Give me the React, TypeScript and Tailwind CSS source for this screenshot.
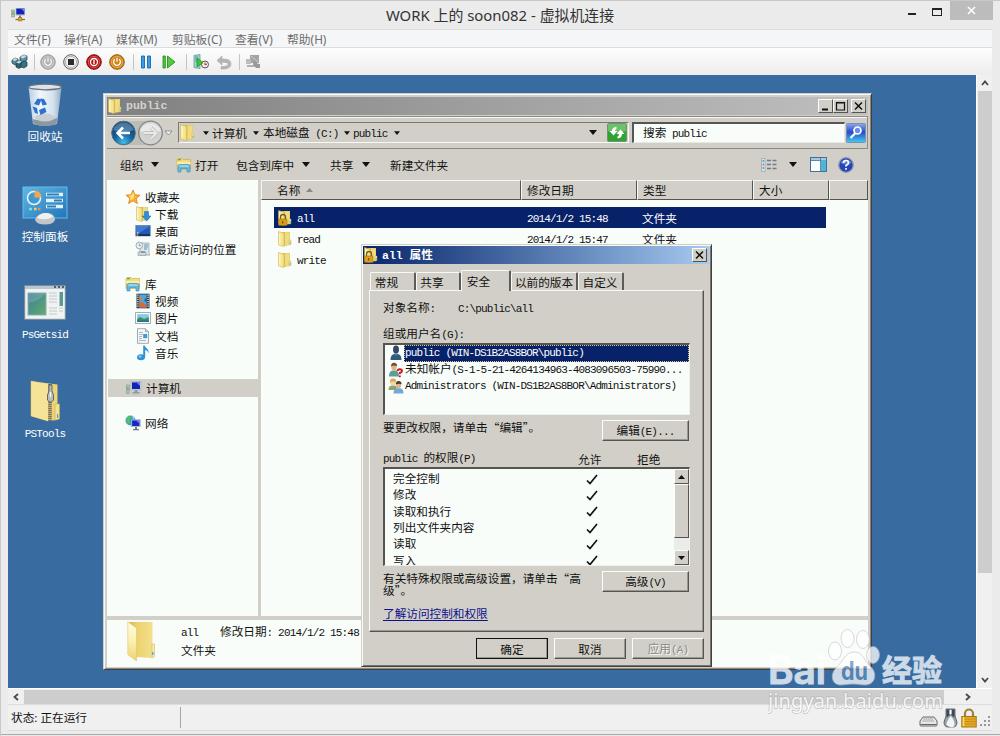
import React from "react";

type Kids = { children?: React.ReactNode };

const RAISED =
  "border border-t-[#fbfdfb] border-l-[#fbfdfb] border-r-[#555550] border-b-[#555550]";

/* Bitmap-like system text: full-width glyphs with half-width Latin between them. */
function T({ s, className = "" }: { s: string; className?: string }) {
  const parts = s.match(/[\x20-\x7e]+|[^\x20-\x7e]+/g) || [];
  return (
    <span className={"whitespace-pre " + className}>
      {parts.map((p, i) =>
        /[\x20-\x7e]/.test(p[0]) ? (
          <span key={i} className="font-['Liberation_Mono',monospace] text-[11px] tracking-[-0.83px]">
            {p}
          </span>
        ) : (
          <span key={i}>{p}</span>
        )
      )}
    </span>
  );
}

function Down({ small = false }: { small?: boolean }) {
  return (
    <svg width={small ? 6 : 8} height={small ? 4 : 5} viewBox="0 0 8 5" className="shrink-0">
      <path d="M0 0h8L4 5z" fill="#111" />
    </svg>
  );
}

function Folder({ size = 16, lock = false, arrow = false }: { size?: number; lock?: boolean; arrow?: boolean }) {
  return (
    <svg width={size} height={size} viewBox="0 0 16 16" className="shrink-0">
      <path d="M5 1h8v13l-6 1z" fill="#dcbf55" />
      <path d="M8 1.300h4.700v12.500L8 14.600z" fill="#f0db82" />
      <path d="M1.500 .6 7 2.200V15.600L1.500 14z" fill="#f6e48f" stroke="#cfae45" strokeWidth=".5" />
      <path d="M2.800 2.200v11.200" stroke="#fdf8cf" strokeWidth="1.200" />
      <path d="M12 9h2v4.500l-2 .5z" fill="#f5e69b" stroke="#c8ab4a" strokeWidth=".4" />
      <path d="M12.600 11h1.200v1.800h-1.200z" fill="#58b9d6" />
      {lock && (
        <g>
          <path d="M3.500 9V7a2.500 2.500 0 0 1 5 0v2" fill="none" stroke="#77611f" strokeWidth="1.300" />
          <rect x="1.500" y="9" width="8.500" height="6.500" rx=".6" fill="#d99e1c" stroke="#8e6510" strokeWidth=".5" />
          <path d="M5.200 11h1v2.500h-1z" fill="#5d420a" />
        </g>
      )}
      {arrow && <path d="M9.500 5.500h4V10H16l-4.500 5L7 10h2.500z" fill="#2b8fdc" stroke="#1768ac" strokeWidth=".5" />}
    </svg>
  );
}

function BigFolder() {
  return (
    <svg width="28" height="41" viewBox="0 0 28 41" className="shrink-0">
      <defs>
        <linearGradient id="bf" x1="0" x2="1"><stop offset="0" stopColor="#d8b949" /><stop offset=".35" stopColor="#ecd26e" /><stop offset="1" stopColor="#f3df8c" /></linearGradient>
        <linearGradient id="bl" x1="0" y1="0" x2="0" y2="1"><stop offset="0" stopColor="#fffce6" /><stop offset=".5" stopColor="#fbf0b0" /><stop offset="1" stopColor="#ecd36f" /></linearGradient>
      </defs>
      <path d="M2 1h23.500v36L9 36z" fill="url(#bf)" />
      <path d="M.8.8 9.500 7v33L.8 33.500z" fill="url(#bl)" stroke="#dfc669" strokeWidth=".6" />
      <path d="M25 23h2.500v12.500L25 37z" fill="#f8ecae" stroke="#d5b856" strokeWidth=".6" />
      <path d="M25 31h1.500v3H25z" fill="#57a9e2" />
    </svg>
  );
}

function Library() {
  return (
    <svg width="16" height="16" viewBox="0 0 16 16" className="shrink-0">
      <path d="M1 2.500 2 1.500h4l1 1h7.500v10H1z" fill="#f3dc7c" stroke="#c9a640" strokeWidth=".6" />
      <path d="M2 2h3v1.300H2z" fill="#57b847" />
      <path d="M1 5h13.500v2H1z" fill="#faedab" />
      <path d="M2 15V9.500Q2 7.500 4 7.500h8q2 0 2 2V15h-3v-3.500H5V15z" fill="#63b9e6" stroke="#3487bb" strokeWidth=".6" />
      <path d="M3 9.500Q3 8.500 4 8.500h8q1 0 1 1z" fill="#c3e8f8" />
    </svg>
  );
}

function Computer({ size = 16 }: { size?: number }) {
  return (
    <svg width={size} height={size} viewBox="0 0 16 16" className="shrink-0">
      <rect x=".6" y="5" width="2.600" height="8.500" fill="#b9bfc2" stroke="#7b8589" strokeWidth=".5" />
      <rect x="1.300" y="7" width="1.200" height="3.500" fill="#4fbf48" />
      <rect x="5" y="1.500" width="10" height="8.500" fill="#c9d2dc" stroke="#9aa4b2" strokeWidth=".5" />
      <rect x="6" y="2.400" width="8" height="6.600" fill="#1421b8" />
      <path d="M10.500 2.400H14V6z" fill="#6c87f0" />
      <path d="M8.500 10h3v2h2v1.500h-7V12h2z" fill="#8f999f" />
      <path d="M6 14h7.500" stroke="#b4bbc0" />
    </svg>
  );
}

function HostIcon() {
  return (
    <svg width="15" height="15" viewBox="0 0 15 15" className="shrink-0">
      <rect x=".6" y="3" width="3" height="7" fill="#b9c6b9" stroke="#7b8589" strokeWidth=".5" />
      <rect x="1.300" y="4.500" width="1.400" height="3.500" fill="#4fbf48" />
      <rect x="4.500" y="1" width="9.500" height="7.500" fill="#b3bfd0" />
      <rect x="5.300" y="1.600" width="8" height="5.800" fill="#1421b8" />
      <path d="M10 1.600h3.300V5z" fill="#6c87f0" />
      <path d="M9 8.500v3" stroke="#5f676c" strokeWidth="1.600" />
      <path d="M4.500 12.500h9.500" stroke="#8a6a1d" strokeWidth="1.200" />
      <rect x="7.300" y="10.700" width="3.600" height="3.300" fill="#e2a423" stroke="#8a6a1d" strokeWidth=".5" />
    </svg>
  );
}

function Star() {
  return (
    <svg width="16" height="16" viewBox="0 0 16 16" className="shrink-0">
      <path d="M8 1l2 4.800 5 .4-3.800 3.300 1.200 5L8 11.800l-4.400 2.700 1.200-5L1 6.200l5-.4z" fill="#fbb034" stroke="#dd7d17" strokeWidth=".8" />
      <path d="M8 3l1.300 3.500L8 10 5 11l.8-2.500-2-1.700 2.700-.3z" fill="#fde382" />
    </svg>
  );
}

function DesktopIcon() {
  return (
    <svg width="16" height="16" viewBox="0 0 16 16" className="shrink-0">
      <rect x=".8" y="2.500" width="14.400" height="10.500" fill="#2658b5" stroke="#55779f" strokeWidth=".6" />
      <path d="M1.200 3h13.600L6 9 1.200 11z" fill="#437bd2" />
      <rect x="1" y="11" width="14" height="2" fill="#18335f" />
      <rect x="2" y="9" width="1.500" height="1.500" fill="#7fe3d3" />
      <circle cx="2.400" cy="12" r=".9" fill="#f18d37" />
    </svg>
  );
}

function Recent() {
  return (
    <svg width="16" height="16" viewBox="0 0 16 16" className="shrink-0">
      <path d="M6 2h8v11l1 1H5V7z" fill="#e3e8ea" stroke="#8b989d" strokeWidth=".7" />
      <path d="M9 4h4M9 6h4M9 8h3" stroke="#5b93b9" />
      <circle cx="4.300" cy="4.500" r="3.300" fill="#eef2f4" stroke="#94a1a8" strokeWidth=".9" />
      <path d="M4.300 2.700v2h1.700" stroke="#637179" fill="none" strokeWidth=".7" />
      <path d="M3 11h8v3.500H3z" fill="#cfd6d9" stroke="#8b989d" strokeWidth=".6" />
      <path d="M6 10h4v2H6z" fill="#7f9dab" />
    </svg>
  );
}

function Video() {
  return (
    <svg width="16" height="16" viewBox="0 0 16 16" className="shrink-0">
      <rect x="1.500" y=".7" width="13" height="14.600" fill="#303a40" />
      <rect x="4.300" y="1.500" width="7.400" height="13" fill="#4ba7e0" />
      <path d="M4.300 3 8 6.500 4.300 8.500z" fill="#e27843" />
      <path d="M11.700 3.500 9 7.500l2.700 2z" fill="#2764a8" />
      <path d="M4.300 10 8 9l3.700 4v1.500H4.300z" fill="#d9683c" />
      <path d="M2.900 1.500v13M13.100 1.500v13" stroke="#e6eef0" strokeWidth="1.300" strokeDasharray="1.200 1" />
    </svg>
  );
}

function Picture() {
  return (
    <svg width="16" height="16" viewBox="0 0 16 16" className="shrink-0">
      <rect x=".6" y="2.600" width="14.800" height="11" fill="#fafcfc" stroke="#8d9aa3" strokeWidth=".8" />
      <rect x="2.200" y="4.200" width="11.600" height="7.800" fill="#86c8e8" />
      <path d="M2.200 9 5 7l4 2 4.800-2v5H2.200z" fill="#3d8f62" />
      <path d="M2.200 10.500h11.600V12H2.200z" fill="#2a6c8d" />
    </svg>
  );
}

function Doc() {
  return (
    <svg width="16" height="16" viewBox="0 0 16 16" className="shrink-0">
      <path d="M2.500.7h8l3 3v11.600h-11z" fill="#f5f8fa" stroke="#8a959c" strokeWidth=".8" />
      <path d="M10.500.7v3h3" fill="#cfd8dd" stroke="#8a959c" strokeWidth=".7" />
      <path d="M4 4.500h4M4 6.500h4M4 8.500h3M4 10.500h3M4 12.500h7" stroke="#99a7b3" strokeWidth=".8" />
      <rect x="8.200" y="6" width="4" height="4.200" fill="#3f9bca" />
    </svg>
  );
}

function Music() {
  return (
    <svg width="16" height="16" viewBox="0 0 16 16" className="shrink-0">
      <ellipse cx="6" cy="12.300" rx="4" ry="3" fill="#2c93d7" />
      <path d="M8.200 12V.5h1.500c.5 2.800 4.900 3.300 3.900 8-.5-2.200-1.700-2.900-3.400-3.400V12z" fill="#2c93d7" />
      <ellipse cx="5" cy="11.500" rx="1.600" ry=".9" fill="#8fd0f3" />
    </svg>
  );
}

function Network() {
  return (
    <svg width="16" height="16" viewBox="0 0 16 16" className="shrink-0">
      <circle cx="5.500" cy="5.500" r="5" fill="#3a9bdb" />
      <path d="M1 4 4 .8 6.500 2 4.500 5 5 8 2.500 9z" fill="#55c455" />
      <path d="M7 1l3 2-2 1z" fill="#a6e0f4" />
      <rect x="6.300" y="4.600" width="9" height="7.200" fill="#c7d2dd" stroke="#8797a4" strokeWidth=".4" />
      <rect x="7.100" y="5.400" width="7.400" height="5.600" fill="#1728c0" />
      <path d="M11 5.400h3.500V8.500z" fill="#6d8cf2" />
      <path d="M10 12h2v2h2v1.200H8V14h2z" fill="#697a86" />
    </svg>
  );
}

function User({ kind }: { kind: "one" | "unknown" | "group" }) {
  return (
    <svg width="16" height="16" viewBox="0 0 16 16" className="shrink-0">
      {kind === "one" && (
        <g>
          <path d="M2.500 15q0-5.500 4-6h3q4 .5 4 6z" fill="#2f5d79" />
          <ellipse cx="8" cy="4.500" rx="3" ry="4" fill="#33466a" />
          <path d="M6.300 8h3.400l-1.700 3z" fill="#6b8ea6" />
        </g>
      )}
      {kind === "unknown" && (
        <g>
          <path d="M1 14.500Q1 9 4.500 8.600h3Q11 9 11 14.500z" fill="#5f9e97" />
          <ellipse cx="6" cy="5" rx="2.700" ry="3.500" fill="#e0b48a" />
          <path d="M3 4.600Q3 .8 6 .8t3.200 3.500Q6 2.800 3 4.600z" fill="#6c4b30" />
          <path d="M9.500 9q.2-1.800 2.300-1.800t2.200 1.700q0 1.400-2.100 2v1.300M11.800 13.400v1.800" stroke="#d4141c" strokeWidth="1.900" fill="none" />
        </g>
      )}
      {kind === "group" && (
        <g>
          <path d="M.5 12Q.5 8 3.500 7.500H7Q9 8 9 12z" fill="#8aa66a" />
          <ellipse cx="5" cy="4.200" rx="2.800" ry="3.300" fill="#f0d6a5" />
          <path d="M2 5Q1.500.6 5 .6T8.200 5L7 3.500 3.200 3.500z" fill="#d6a850" />
          <path d="M5.500 15.500q0-5 3.500-5.300h3q3.500.3 3.500 5.300z" fill="#77a6d8" />
          <ellipse cx="10.600" cy="7" rx="2.500" ry="3.200" fill="#dfb18c" />
          <path d="M7.800 6.600Q7.800 3 10.600 3t3 3.300q-3-1.300-5.800.3z" fill="#49372d" />
        </g>
      )}
    </svg>
  );
}

function Power({ a, b, fg, kind = "power" }: { a: string; b: string; fg: string; kind?: string }) {
  return (
    <svg width="16" height="16" viewBox="0 0 16 16" className="shrink-0">
      <circle cx="8" cy="8" r="7.300" fill={a} stroke={b} strokeWidth="1" />
      <circle cx="8" cy="8" r="5.600" fill="none" stroke={fg} strokeWidth=".5" opacity=".6" />
      {kind === "power" && <path d="M8 3.800v4M5.800 5.300a3.400 3.400 0 1 0 4.400 0" stroke={fg} strokeWidth="1.200" fill="none" />}
      {kind === "off" && (
        <g stroke={fg} strokeWidth="1.300" fill="none">
          <circle cx="8" cy="8" r="3.500" />
          <path d="M8 6v4" />
        </g>
      )}
      {kind === "stop" && <rect x="5" y="5" width="6" height="6" fill={fg} />}
    </svg>
  );
}

const Sep = () => <div className="flex w-2 justify-center"><div className="h-4 w-px bg-[#c4c4c4]" /></div>;

function HostToolbar() {
  return (
    <div className="flex h-[26px] shrink-0 items-center bg-linear-to-b from-[#fdfdfd] to-[#ededed]">
      <div className="flex w-[22px] justify-center">
        <svg width="17" height="16" viewBox="0 0 17 16">
          <g stroke="#183947" strokeWidth=".7">
            <path d="M1 6l3-2 3 1v4L4 11 1 9z" fill="#53899a" />
            <path d="M9 3l4-2 3 1v4l-4 2-3-1z" fill="#5b93a3" />
            <path d="M5 8.500l3-2 3 1v5l-3 2-3-1.500z" fill="#2d6172" />
            <path d="M10 9l3-2 3 1v4l-3 2-3-1z" fill="#39717f" />
          </g>
          <path d="M1 6l3 1 3-2-3-1zM9 3l3 1.500L16 2l-3-1zM5 8.500l3 1 3-2-3-1z" fill="#c0dde2" />
        </svg>
      </div>
      <Sep />
      <div className="flex w-[19px] justify-center"><Power a="#b5b5b5" b="#a2a2a2" fg="#f4f4f4" /></div>
      <div className="flex w-[27px] justify-center"><Power a="#efefef" b="#5d5d5d" fg="#2b2b2b" kind="stop" /></div>
      <div className="flex w-[20px] justify-center"><Power a="#b81414" b="#7f1010" fg="#fff" kind="off" /></div>
      <div className="flex w-[25px] justify-center"><Power a="#d18514" b="#9b5b08" fg="#fff" /></div>
      <Sep />
      <div className="flex w-[18px] justify-center">
        <svg width="12" height="14" viewBox="0 0 12 14"><path d="M1.500 1h3v12h-3zM7.500 1h3v12h-3z" fill="#379fe5" stroke="#1867ae" strokeWidth=".9" /></svg>
      </div>
      <div className="flex w-[27px] justify-center">
        <svg width="14" height="14" viewBox="0 0 14 14"><path d="M1 1h2.300v12H1zM5.500 1 13 7l-7.500 6z" fill="#52ca3a" stroke="#269322" strokeWidth=".9" /></svg>
      </div>
      <Sep />
      <div className="flex w-[22px] justify-center">
        <svg width="16" height="16" viewBox="0 0 16 16">
          <path d="M1 1.500 7 .5v14l-6-1z" fill="#9ed5d6" stroke="#4f9494" strokeWidth=".7" />
          <path d="M2 3h3M2 5h3M2 7h2" stroke="#357f86" strokeWidth=".7" />
          <circle cx="12" cy="10.500" r="3.500" fill="#eee" stroke="#555" />
          <path d="M12 8.500v2.500l2-1" stroke="#c22" fill="none" />
          <path d="M4 4l6 4.500L4 13z" fill="#43c52f" stroke="#1e8d1d" strokeWidth=".7" />
        </svg>
      </div>
      <div className="flex w-[23px] justify-center">
        <svg width="16" height="15" viewBox="0 0 16 15"><path d="M6 1v3q9-.5 9 5 0 4-6 5-1.500.2-4 0v-2.500h3Q12 11 12 9T6 7.200V10L1 5.500z" fill="#b5b5b5" stroke="#a2a2a2" strokeWidth=".5" /></svg>
      </div>
      <Sep />
      <div className="flex w-[19px] justify-center">
        <svg width="16" height="16" viewBox="0 0 16 16">
          <path d="M5 1h9v8H5z" fill="#a5a5a5" /><path d="M1 5h5v5H1z" fill="#bdbdbd" />
          <path d="M8 9h3v2h4v2H2v-2h6z" fill="#b1b1b1" /><path d="M9 6l4 4h2v4h-4l-3-4z" fill="#999" />
          <path d="M6 2l7 6" stroke="#ccc" />
        </svg>
      </div>
    </div>
  );
}

function DeskItem({ pos, label, children }: { pos: string; label: string } & Kids) {
  return (
    <div className={"absolute left-0 flex w-[74px] flex-col items-center " + pos}>
      <div className="flex h-[46px] items-center justify-center">{children}</div>
      <T s={label} className="h-4 leading-4 text-white" />
    </div>
  );
}

function DesktopIcons() {
  return (
    <>
      <DeskItem pos="top-[7px]" label="回收站">
        <svg width="36" height="44" viewBox="0 0 36 44">
          <defs>
            <linearGradient id="bin" x1="0" x2="1"><stop offset="0" stopColor="#b8cfe6" /><stop offset=".35" stopColor="#f1f7fc" /><stop offset=".75" stopColor="#d4e2ef" /><stop offset="1" stopColor="#94adc6" /></linearGradient>
          </defs>
          <path d="M1.500 4h33L30 41q-12 3-24 0z" fill="url(#bin)" />
          <path d="M5.500 36q12 3 25-1l-1 6q-11 4-23 0z" fill="#8d979f" />
          <ellipse cx="18" cy="34.500" rx="10" ry="4" fill="#c8cfd4" />
          <ellipse cx="18" cy="4" rx="16.500" ry="2.800" fill="#dae4ec" stroke="#6c7378" strokeWidth="1.300" />
          <g fill="#3070d0">
            <path d="M7 21l3.500-5.500 4 1-2.500 6z" />
            <path d="M13.500 15.500l3.500.5 3 5.500-4.500 1z" />
            <path d="M5.500 23.500l4.500 1.500 1 6-3-1z" />
            <path d="M12 27l6-2.500 1.500 4.500-6 3z" />
          </g>
        </svg>
      </DeskItem>
      <DeskItem pos="top-[107px]" label="控制面板">
        <svg width="46" height="40" viewBox="0 0 46 40">
          <defs><linearGradient id="cp" x1="0" y1="0" x2="1" y2="1"><stop offset="0" stopColor="#5fb7e6" /><stop offset="1" stopColor="#2474b9" /></linearGradient></defs>
          <rect x="1" y="2" width="44" height="31" fill="url(#cp)" stroke="#5dc1ec" />
          <circle cx="12" cy="13" r="6.500" fill="#3f9bd4" stroke="#e8f6fc" strokeWidth="1.500" />
          <path d="M12.500 12.500V5.500a7 7 0 0 1 7 7z" fill="#f3a850" />
          <path d="M24 9.500h17M24 15.500h17M24 21.500h17" stroke="#dff3fb" strokeWidth="3.400" />
          <path d="M25 9.500h12M32 15.500h8M25 21.500h9" stroke="#2b80be" strokeWidth="1.800" />
          <path d="M7 24h3" stroke="#74e4dd" strokeWidth="2.500" /><path d="M12 24h2.500" stroke="#f8d058" strokeWidth="2.500" /><path d="M16 24h2.500" stroke="#f08b52" strokeWidth="2.500" />
          <path d="M13 35q2-7 11-7t9 7q-2 4.500-10 4.500t-10-4.500z" fill="#c3c6ca" />
          <path d="M15 33q3-5 9-5 5 0 7 4-8 4-16 1z" fill="#f0f1f2" />
        </svg>
      </DeskItem>
      <DeskItem pos="top-[204px]" label="PsGetsid">
        <svg width="42" height="35" viewBox="0 0 42 35">
          <defs><linearGradient id="ps" x1="0" y1="0" x2="1" y2="1"><stop offset="0" stopColor="#3d7e9c" /><stop offset="1" stopColor="#61ad69" /></linearGradient></defs>
          <rect x=".7" y=".7" width="40.600" height="33.600" fill="#f1f3f3" stroke="#7c8c97" />
          <rect x="1" y="1" width="40" height="3" fill="#b9c5cf" />
          <path d="M30 2h2M34 2h2M38 2h2" stroke="#333f4a" strokeWidth="1.500" />
          <rect x="4" y="8" width="18" height="22" fill="url(#ps)" stroke="#8fadb0" />
          <path d="M5 18q10-2 16-9v-.5H5z" fill="#9cc7c9" opacity=".3" />
          <path d="M25 8h8M25 11h8M25 14h8M25 17h8M25 23h8M25 26h8M25 29h8M35 23h4M35 26h4" stroke="#c3c8ca" strokeWidth="1" />
          <rect x="35.500" y="7" width="3.500" height="14" fill="#5a9a91" />
        </svg>
      </DeskItem>
      <DeskItem pos="top-[303px]" label="PSTools">
        <svg width="44" height="42" viewBox="0 0 44 42">
          <path d="M8 1 25 4v37L8 36z" fill="#f5e398" stroke="#cfb055" strokeWidth=".6" />
          <path d="M18 2.500 34.500 4.500V40L24 41z" fill="#ecd477" />
          <path d="M8.300 1.300 25 4v37L8.300 36z" fill="#f5e398" />
          <path d="M32 24h4.500v15L32 40z" fill="#f3e194" stroke="#caa94a" strokeWidth=".6" />
          <path d="M34 34h1.200v4H34z" fill="#4a9de0" />
          <path d="M27 4v37" stroke="#c2a765" strokeWidth="3.500" />
          <path d="M27 4v37" stroke="#77756b" strokeWidth="3.500" strokeDasharray="1 1" />
          <path d="M26 5h3v6l1.500 4v5l-2 2h-2l-2-2v-5l1.500-4z" fill="#b8bdc0" stroke="#4b4f53" strokeWidth=".8" />
          <path d="M27.500 12v5" stroke="#f6f6f6" strokeWidth="1.300" />
        </svg>
      </DeskItem>
    </>
  );
}

function CaptionButton({ kind }: { kind: "min" | "max" | "close" }) {
  return (
    <div className={"flex h-[14px] w-[15px] items-center justify-center bg-[#d1cfc8] " + RAISED}>
      <svg width="11" height="10" viewBox="0 0 11 10" fill="none" stroke="#111">
        {kind === "min" && <path d="M2 8.500h6" strokeWidth="2" />}
        {kind === "max" && <path d="M1.500 1.500h8v7.500h-8zM1.500 2h8" strokeWidth="1.200" />}
        {kind === "close" && <path d="M2 1.500l7 7M9 1.500l-7 7" strokeWidth="1.500" />}
      </svg>
    </div>
  );
}

function NavBar() {
  return (
    <div className="flex h-[33px] shrink-0 items-center border-t border-r border-b border-[#8b8a85] shadow-[inset_0_1px_0_#f6f8f4]">
      <svg width="68" height="28" viewBox="0 0 68 28" className="shrink-0">
        <defs>
          <radialGradient id="bk" cx=".5" cy=".9" r=".8"><stop offset="0" stopColor="#44bde8" /><stop offset=".5" stopColor="#15639f" /><stop offset="1" stopColor="#0c3d70" /></radialGradient>
        </defs>
        <rect x="5" y="2" width="49" height="24" rx="12" fill="#bdbdb8" />
        <circle cx="16.500" cy="14" r="11.800" fill="url(#bk)" stroke="#526d80" />
        <path d="M6 11a11 11 0 0 1 21 0q-10 4-21 0z" fill="#b9dcec" opacity=".35" />
        <path d="M16 8.500l-5.500 5.500 5.500 5.500M11 14H23" stroke="#fff" strokeWidth="2.500" fill="none" />
        <circle cx="43.500" cy="14" r="11.800" fill="#d2d3d0" stroke="#85878a" strokeWidth="1.300" />
        <path d="M33 12a11 11 0 0 1 21 0q-10 3-21 0z" fill="#f2f3f2" opacity=".7" />
        <path d="M44 8.500l5.500 5.500-5.500 5.500M49 14H37" stroke="#b4b5b2" strokeWidth="3.400" fill="none" />
        <path d="M44 8.500l5.500 5.500-5.500 5.500M49 14H37" stroke="#e9eae8" strokeWidth="2.200" fill="none" />
        <path d="M58 12h7l-3.500 4z" fill="#f8f8f8" stroke="#68707f" strokeWidth=".7" />
      </svg>
      <div className="ml-[3px] flex h-[21px] w-[451px] items-center border border-t-[#777] border-l-[#777] border-r-[#f7f9f5] border-b-[#f7f9f5]">
        <Folder size={17} />
        <div className="ml-[5px] flex w-[10px] justify-center"><Down small /></div>
        <T s="计算机" className="ml-px w-[37px]" />
        <div className="flex w-[13px] justify-center"><Down small /></div>
        <T s="本地磁盘 (C:)" className="ml-px w-[78px]" />
        <div className="flex w-[11px] justify-center"><Down small /></div>
        <T s="public" className="ml-px w-[38px]" />
        <div className="flex w-[11px] justify-center"><Down small /></div>
        <div className="flex-1" />
        <div className="mr-[10px]"><Down /></div>
        <svg width="20" height="19" viewBox="0 0 20 19" className="mr-px">
          <rect x=".5" y=".5" width="19" height="18" rx="1.500" fill="#2fa32f" stroke="#719574" />
          <path d="M1 1h18v7q-9 3-18 0z" fill="#93d68f" opacity=".6" />
          <path d="M9.500 4Q5 4 5 8H2.500L6.500 12.500 10.500 8H8q0-1.500 1.500-2zM10.500 15.500q4.500-.5 4.500-4.500h2.500L13.500 6.500 9.500 11H12q0 2-1.500 2.500z" fill="#fff" />
        </svg>
      </div>
      <div className="ml-[3px] flex h-[21px] w-[213px] items-center border border-t-2 border-l-2 border-t-[#555] border-l-[#555] border-r-[#e8e8e2] border-b-[#e8e8e2] bg-[#f9fdfa] pl-[9px]">
        <T s="搜索 public" />
      </div>
      <svg width="20" height="20" viewBox="0 0 20 20" className="ml-px shrink-0">
        <defs><linearGradient id="sb" y1="0" y2="1" x1="0" x2="0"><stop offset="0" stopColor="#8fabf0" /><stop offset=".45" stopColor="#2849c8" /><stop offset="1" stopColor="#41d0ef" /></linearGradient></defs>
        <rect x=".5" y=".5" width="19" height="19" rx="1" fill="url(#sb)" stroke="#7590bd" />
        <circle cx="11.500" cy="7.500" r="3.500" fill="#6b8ee5" stroke="#fff" strokeWidth="1.700" />
        <path d="M9 10.500 4.500 15" stroke="#fff" strokeWidth="2.300" />
      </svg>
    </div>
  );
}

function CommandBar() {
  return (
    <div className="flex h-[31px] shrink-0 items-center pl-[13px]">
      <T s="组织" className="w-[31px]" />
      <div className="w-[25px]"><Down /></div>
      <div className="w-[19px]"><Library /></div>
      <T s="打开" className="w-[41px]" />
      <T s="包含到库中" className="w-[66px]" />
      <div className="w-[28px]"><Down /></div>
      <T s="共享" className="w-[32px]" />
      <div className="w-[28px]"><Down /></div>
      <T s="新建文件夹" />
      <div className="flex-1" />
      <svg width="16" height="14" viewBox="0 0 16 14" className="mr-[12px]">
        <path d="M.5.500h3.500v13H.5z" fill="#d9e7ee" stroke="#8fa3b3" strokeWidth=".7" />
        <path d="M2.300 2v2M2.300 9v2" stroke="#58a4d2" strokeWidth="1.500" /><path d="M2.300 5.500v2" stroke="#df6c5c" strokeWidth="1.500" />
        <path d="M6 2.500h4M11.500 2.500h4M6 6.500h4M11.500 6.500h4M6 10.500h4M11.500 10.500h4" stroke="#6d7c8b" strokeWidth="1.300" />
      </svg>
      <div className="mr-[13px]"><Down /></div>
      <svg width="17" height="15" viewBox="0 0 17 15" className="mr-[11px]">
        <rect x=".5" y=".5" width="16" height="14" fill="#fafdff" stroke="#486f90" />
        <path d="M1 1h15v2.500H1z" fill="#a8c8df" /><path d="M11 3h5v11h-5z" fill="#4db4da" />
        <path d="M10.500 1v13M1 3.500h10" stroke="#486f90" strokeWidth=".8" />
      </svg>
      <svg width="16" height="16" viewBox="0 0 16 16" className="mr-[14px]">
        <circle cx="8" cy="8" r="7.300" fill="#2546b6" stroke="#929bb0" strokeWidth="1.300" />
        <path d="M2.500 6a6 6 0 0 1 11 0q-5 3-11 0z" fill="#88a7e8" opacity=".6" />
        <path d="M5.500 6q0-2.500 2.500-2.500t2.500 2.200Q10.500 7.300 8 8.500v1M8 11v1.800" stroke="#fff" strokeWidth="1.700" fill="none" />
      </svg>
    </div>
  );
}

const tree: [string, React.ReactNode, number][] = [
  ["收藏夹", <Star />, 0],
  ["下载", <Folder arrow />, 1],
  ["桌面", <DesktopIcon />, 1],
  ["最近访问的位置", <Recent />, 1],
  ["", null, 0],
  ["库", <Library />, 0],
  ["视频", <Video />, 1],
  ["图片", <Picture />, 1],
  ["文档", <Doc />, 1],
  ["音乐", <Music />, 1],
  ["", null, 0],
  ["计算机", <Computer />, 0],
  ["", null, 0],
  ["网络", <Network />, 0],
];

const files = [
  { name: "all", date: "2014/1/2 15:48", lock: true },
  { name: "read", date: "2014/1/2 15:47", lock: false },
  { name: "write", date: "", lock: false },
];

function Explorer() {
  const head = "flex h-[20px] items-center border-t border-b border-l border-t-[#f7f8f5] border-l-[#f7f8f5] border-b-[#55544f] border-r border-r-[#55544f] ";
  return (
    <div className="absolute left-[95px] top-[18px] flex h-[577px] w-[769px] flex-col border border-t-[#d1cfc8] border-l-[#d1cfc8] border-r-[#404040] border-b-[#404040] bg-[#d1cfc8] shadow-[inset_1px_1px_0_#f7f9f5,inset_-1px_-1px_0_#87867f] p-[3px] pb-[2px]">
      <div className="flex h-[18px] shrink-0 items-center bg-linear-to-r from-[#808080] to-[#c0c0c0] pr-[2px]">
        <Folder size={16} />
        <span className="ml-[3px] font-['Liberation_Mono',monospace] text-[11.500px] font-bold text-[#d4d2cc]">public</span>
        <div className="flex-1" />
        <CaptionButton kind="min" />
        <CaptionButton kind="max" />
        <div className="w-[3px]" />
        <CaptionButton kind="close" />
      </div>
      <div className="h-px shrink-0" />
      <NavBar />
      <CommandBar />
      <div className="flex min-h-0 flex-1">
        <div className="w-[151px] bg-[#f9fdfa] pt-[8px]">
          {tree.map(([label, icon, depth], i) => (
            <div key={i} className={"flex h-[17.400px] items-center " + (depth ? "pl-[28px] " : "pl-[18px] ") + (label === "计算机" ? "ml-px bg-[#d1cfc8]" : "")}>
              {icon}
              <T s={label} className="ml-[4px]" />
            </div>
          ))}
        </div>
        <div className="w-[3px] shrink-0" />
        <div className="min-w-0 flex-1 bg-[#f9fdfa]">
          <div className="flex bg-[#d1cfc8]">
            <div className={head + "w-[260px] gap-[6px] pl-[15px]"}>
              <T s="名称" />
              <svg width="7" height="4" viewBox="0 0 7 4"><path d="M0 4h7L3.500 0z" fill="#898984" /></svg>
            </div>
            <div className={head + "w-[116px] pl-[5px]"}><T s="修改日期" /></div>
            <div className={head + "w-[116px] pl-[5px]"}><T s="类型" /></div>
            <div className={head + "w-[76px] pl-[5px]"}><T s="大小" /></div>
            <div className={head + "flex-1"} />
          </div>
          <div className="pl-[13px] pt-[7px]">
            {files.map((f, i) => (
              <div key={f.name} className={"flex h-[21px] w-[552px] items-center pl-[3px] " + (i === 0 ? "bg-[#08226a] text-white" : "")}>
                <Folder size={16} lock={f.lock} />
                <T s={f.name} className="ml-[4px] w-[230px]" />
                <T s={f.date} className="w-[115px]" />
                <T s={f.date ? "文件夹" : ""} />
              </div>
            ))}
          </div>
        </div>
      </div>
      <div className="h-[4px] shrink-0" />
      <div className="flex h-[47px] shrink-0 bg-[#f9fdfa] pl-[20px] pt-px">
        <BigFolder />
        <div className="ml-[26px] flex flex-col pt-[2px]">
          <div className="flex h-[18px] items-center"><T s="all" className="w-[39px]" /><T s="修改日期: 2014/1/2 15:48" /></div>
          <div className="flex h-[18px] items-center"><T s="文件夹" /></div>
        </div>
      </div>
    </div>
  );
}

function Btn({ s, className = "" }: { s: string; className?: string }) {
  return (
    <div className={"flex h-[21px] items-center justify-center bg-[#d1cfc8] shadow-[inset_-1px_-1px_0_#99978f] " + RAISED + " " + className}>
      <T s={s} />
    </div>
  );
}

const users: [("one" | "unknown" | "group"), string][] = [
  ["one", "public (WIN-DS1B2AS8BOR\\public)"],
  ["unknown", "未知帐户(S-1-5-21-4264134963-4083096503-75990..."],
  ["group", "Administrators (WIN-DS1B2AS8BOR\\Administrators)"],
];

const perms = ["完全控制", "修改", "读取和执行", "列出文件夹内容", "读取", "写入"];

function Dialog() {
  const tab = "flex h-[18px] items-center justify-center rounded-t-[2px] border-t border-l border-r-2 border-t-[#f7f9f5] border-l-[#f7f9f5] border-r-[#5d5c57] ";
  const sunken = "border border-t-2 border-l-2 border-t-[#55544f] border-l-[#55544f] border-r-[#eef0ea] border-b-[#eef0ea] bg-[#f9fdfa] ";
  return (
    <div className="absolute left-[353px] top-[169px] flex h-[423px] w-[351px] flex-col border border-t-[#d1cfc8] border-l-[#d1cfc8] border-r-[#404040] border-b-[#404040] bg-[#d1cfc8] pl-px pt-px shadow-[inset_1px_1px_0_#f7f9f5,inset_-1px_-1px_0_#77766f]">
      <div className="mr-[2px] flex h-[18px] shrink-0 items-center bg-linear-to-r from-[#0a246a] to-[#a6caf0] pr-[2px] text-white">
        <Folder size={16} lock />
        <span className="ml-[3px] whitespace-pre font-bold">
          <span className="font-['Liberation_Mono',monospace] text-[11.500px]">all </span>属性
        </span>
        <div className="flex-1" />
        <CaptionButton kind="close" />
      </div>
      <div className="flex h-[26px] shrink-0 items-end pl-[7px]">
        <div className={tab + "w-[46px] pr-3"}><T s="常规" /></div>
        <div className={tab + "w-[45px] border-r-0 pr-3"}><T s="共享" /></div>
        <div className={tab + "z-10 -mb-px h-[21px] w-[50px] bg-[#d1cfc8] pr-[14px]"}><T s="安全" /></div>
        <div className={tab + "w-[67px]"}><T s="以前的版本" /></div>
        <div className={tab + "w-[46px] pr-px"}><T s="自定义" /></div>
      </div>
      <div className="ml-[6px] flex h-[342px] w-[335px] shrink-0 flex-col border border-t-[#f7f9f5] border-l-[#f7f9f5] border-r-[#55544f] border-b-[#55544f] pl-[13px] shadow-[inset_-1px_-1px_0_#99978f]">
        <div className="flex h-[34px] items-center"><T s="对象名称:" className="w-[75px]" /><T s="C:\public\all" /></div>
        <div className="flex h-[18px] items-center"><T s="组或用户名(G):" /></div>
        <div className={sunken + "h-[72px] w-[307px] shrink-0"}>
          {users.map(([k, s], i) => (
            <div key={k} className="flex h-[16.500px] items-center pl-[3px]">
              <User kind={k} />
              <div className={"flex h-full flex-1 items-center " + (i === 0 ? "bg-[#08226a] text-white outline-1 -outline-offset-1 outline-dotted outline-[#d9c98a]" : "")}>
                <T s={s} className="-mt-[2px] pl-px" />
              </div>
            </div>
          ))}
        </div>
        <div className="flex h-[27px] shrink-0 justify-between pr-[14px] pt-[5px]">
          <T s="要更改权限，请单击“编辑”。" className="leading-[14px]" />
          <Btn s="编辑(E)..." className="w-[87px]" />
        </div>
        <div className="flex h-[25px] shrink-0 items-end">
          <T s="public 的权限(P)" className="w-[195px]" /><T s="允许" className="w-[59px]" /><T s="拒绝" />
        </div>
        <div className={sunken + "flex h-[99px] w-[307px] shrink-0 overflow-hidden border-r-[#33322f] border-b-[#33322f]"}>
          <div className="h-full flex-1 overflow-hidden pl-[8px] pt-px">
            {perms.map((p) => (
              <div key={p} className="flex h-[16.300px] items-center">
                <T s={p} className="w-[193px]" />
                <svg width="12" height="11" viewBox="0 0 12 11" className="mt-[2px]"><path d="M1 6.500 4 9.500 11 1" stroke="#111" strokeWidth="1.700" fill="none" /></svg>
              </div>
            ))}
          </div>
          <div className="flex w-[15px] flex-col bg-[#ebece7]">
            <div className={"flex h-[15px] items-center justify-center bg-[#d1cfc8] " + RAISED}>
              <svg width="7" height="4" viewBox="0 0 7 4"><path d="M0 4h7L3.500 0z" fill="#111" /></svg>
            </div>
            <div className={"h-[54px] bg-[#d1cfc8] " + RAISED} />
            <div className="flex-1" />
            <div className={"flex h-[15px] items-center justify-center bg-[#d1cfc8] " + RAISED}>
              <svg width="7" height="4" viewBox="0 0 7 4"><path d="M0 0h7L3.500 4z" fill="#111" /></svg>
            </div>
          </div>
        </div>
        <div className="flex h-[28px] shrink-0 justify-between pr-[14px] pt-[5px]">
          <div className="flex flex-col pt-px leading-[12px]"><T s="有关特殊权限或高级设置，请单击“高" /><T s="级”。" /></div>
          <Btn s="高级(V)" className="w-[87px]" />
        </div>
        <div className="flex flex-1 items-center"><T s="了解访问控制和权限" className="text-[#10108c] underline underline-offset-2" /></div>
      </div>
      <div className="mt-[6px] flex justify-end gap-[6px] pr-[7px]">
        <Btn s="确定" className="w-[72px] outline-1 -outline-offset-1 outline-[#111]" />
        <Btn s="取消" className="w-[72px]" />
        <Btn s="应用(A)" className="w-[72px] text-[#8b8a84] [text-shadow:1px_1px_0_#f7f9f5]" />
      </div>
    </div>
  );
}

function Watermark() {
  return (
    <div className="absolute left-[767px] top-[628px] h-[86px] w-[180px] opacity-75">
      <svg width="180" height="86" viewBox="0 0 180 86" stroke="#b9c0c6" strokeWidth=".8" fill="#fff">
        <ellipse cx="67" cy="22" rx="6.500" ry="9" />
        <ellipse cx="79.500" cy="9.500" rx="6.500" ry="9" />
        <ellipse cx="95" cy="10.500" rx="6.500" ry="9" />
        <ellipse cx="105" cy="26" rx="6.500" ry="8.500" />
        <path d="M86 23c9 0 10 9 17 15 7 7 4 18-6 18-5 0-7-1-12-1s-8 1-12 1c-10 0-11-11-5-17 7-6 9-16 18-16z" />
        <g stroke="#fff" strokeWidth="1">
          <text x="0" y="55" fontFamily="Inter, sans-serif" fontWeight="600" fontSize="39" textLength="58" lengthAdjust="spacingAndGlyphs">Bai</text>
          <text x="73" y="51" fontFamily="Inter, sans-serif" fontWeight="700" fontSize="25" fill="#5f8cba" stroke="none" textLength="27" lengthAdjust="spacingAndGlyphs">du</text>
          <text x="114" y="52" fontFamily="'Noto Sans CJK SC', sans-serif" fontWeight="700" fontSize="30" textLength="60">经验</text>
        </g>
        <g fontFamily="'Noto Sans', sans-serif" fontSize="20">
          <text x="0" y="79" textLength="175" stroke="#b4b4b4" strokeWidth="1.500" paintOrder="stroke">jingyan.baidu.com</text>
        </g>
      </svg>
    </div>
  );
}

function Chevron({ d }: { d: string }) {
  return <svg width="8" height="8" viewBox="0 0 8 8"><path d={d} stroke="#484848" strokeWidth="1.800" fill="none" /></svg>;
}

export default function App() {
  return (
    <div
      lang="zh-CN"
      className="relative flex h-[736px] w-[1000px] flex-col overflow-hidden border-t border-l border-[#c8c8c8] bg-[#ebebeb] pl-[7px] pr-2 font-['Noto_Sans_CJK_SC',sans-serif] text-[11.650px] leading-[16px] text-[#111]"
    >
      <div className="relative flex h-[28px] shrink-0 items-center justify-center">
        <div className="absolute left-[3px] top-[6px]"><HostIcon /></div>
        <span className="font-['Noto_Sans','Noto_Sans_CJK_SC',sans-serif] text-[14.900px] text-[#333]">WORK 上的 soon082 - 虚拟机连接</span>
        <div className="absolute -right-px top-0 flex h-[19px] items-center">
          <div className="mr-[16px] mt-[7px] h-[2px] w-[8px] bg-[#222]" />
          <div className="mr-[8px] mt-[2px] h-[8px] w-[10px] border border-t-2 border-[#222]" />
          <div className="flex h-[19px] w-[43px] items-center justify-center bg-[#bcbcbc]">
            <svg width="9" height="9" viewBox="0 0 9 9"><path d="M1 1l7 7M8 1 1 8" stroke="#fff" strokeWidth="1.600" /></svg>
          </div>
        </div>
      </div>
      <div className="flex h-[19px] shrink-0 items-center border-t border-b border-[#dcdcdc] bg-[#f5f6f7] pl-[6px] font-['Noto_Sans','Noto_Sans_CJK_SC',sans-serif] text-[11.800px] text-[#6d6d6d]">
        <span className="w-[50px]">文件(F)</span>
        <span className="w-[52px]">操作(A)</span>
        <span className="w-[56px]">媒体(M)</span>
        <span className="w-[63px]">剪贴板(C)</span>
        <span className="w-[52px]">查看(V)</span>
        <span>帮助(H)</span>
      </div>
      <div className="h-px shrink-0 bg-[#fff]" />
      <HostToolbar />
      <div className="flex h-[613px] shrink-0">
        <div className="relative h-full w-[968px] shrink-0 overflow-hidden bg-[#386ba0]">
          <DesktopIcons />
          <Explorer />
          <Dialog />
        </div>
        <div className="flex w-[16px] flex-col items-center border-l border-white bg-[#f0f0f0]">
          <div className="flex h-[16px] items-center"><Chevron d="M1 6 4 2.500 7 6" /></div>
          <div className="h-[482px] w-[14px] bg-[#cdcdcd]" />
          <div className="flex-1" />
          <div className="flex h-[16px] items-center"><Chevron d="M1 2 4 5.500 7 2" /></div>
        </div>
      </div>
      <div className="flex h-[16px] shrink-0 items-center border-t border-white bg-[#f0f0f0]">
        <div className="flex w-[16px] justify-center"><Chevron d="M6 1 2.500 4 6 7" /></div>
        <div className="h-[14px] w-[920px] bg-[#cdcdcd]" />
        <div className="flex-1" />
        <div className="mr-[20px]"><Chevron d="M2 1l3.500 3L2 7" /></div>
      </div>
      <div className="flex h-[27px] shrink-0 items-center border-t border-b border-[#dcdcdc] bg-[#f0f0f0] pl-[3px]">
        <span className="w-[169px] font-['Noto_Sans','Noto_Sans_CJK_SC',sans-serif]">状态: 正在运行</span>
        <div className="h-[21px] w-px bg-[#a5a5a5]" />
        <div className="flex-1" />
        <svg width="19" height="11" viewBox="0 0 19 11" className="mt-[8px] mr-[5px]"><path d="M4 1h11l3 4v4q0 1-1 1H2q-1 0-1-1V5z" fill="#e5e7e9" stroke="#65696d" /><path d="M4.500 3h10M3.500 5h12" stroke="#8b8f93" strokeDasharray="1.300 .7" /><path d="M1.500 8.500h16" stroke="#666" /></svg>
        <svg width="15" height="20" viewBox="0 0 15 20" className="mr-[3px]"><path d="M3 1h9v7l2 6q0 5-4 5H5q-4 0-4-5l2-6z" fill="#9ba3ac" stroke="#4b5157" strokeWidth=".8" /><path d="M7.500 8q4 4 4 8t-4 3-4-3 4-8z" fill="#f3f4f5" /><path d="M3.500 1.500h3v6l-3 2zM8.500 1.500h3v8l-3-2z" fill="#3d4956" /><path d="M7.500 2v4" stroke="#fff" strokeWidth="2" /></svg>
        <svg width="16" height="20" viewBox="0 0 16 20" className="mr-[3px]"><path d="M4 9V5.500a4 4 0 0 1 8 0V9" fill="none" stroke="#9d8138" strokeWidth="2.200" /><rect x=".8" y="8.500" width="14.400" height="10.500" fill="#e5aa24" stroke="#a67512" /><path d="M1.500 11h13M1.500 13.500h13M1.500 16h13" stroke="#c78b14" /><path d="M2.500 9v9" stroke="#fbdc78" strokeWidth="1.500" /></svg>
        <svg width="11" height="11" viewBox="0 0 11 11" className="mt-[8px] mr-px" fill="#999"><path d="M8 0h2v2H8zM4 4h2v2H4zM8 4h2v2H8zM0 8h2v2H0zM4 8h2v2H4zM8 8h2v2H8z" /></svg>
      </div>
      <div className="-ml-[7px] -mr-2 mt-[3px] h-px shrink-0 bg-[#aaa]" />
      <Watermark />
    </div>
  );
}
